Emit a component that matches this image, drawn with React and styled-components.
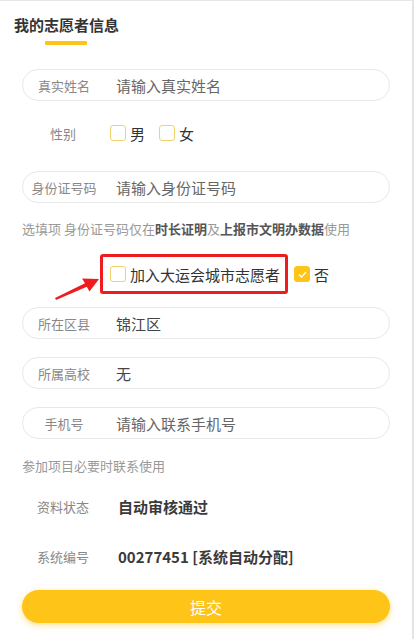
import React from "react";
import styled, { createGlobalStyle } from "styled-components";

const Global = createGlobalStyle`
  html, body { margin: 0; padding: 0; background: #fff; }
  body { font-family: "Noto Sans CJK SC", "Noto Sans", sans-serif; }
`;

const YELLOW = "#fec418";

const Page = styled.div`
  position: relative;
  width: 414px;
  height: 639px;
  box-sizing: border-box;
  border-top: 1px solid #e6e6e6;
  border-right: 2px solid #e4e4e4;
  overflow: hidden;
`;

const Header = styled.div`
  padding: 14px 0 0 14px;
  height: 55px;
  box-sizing: border-box;
`;

const Title = styled.div`
  font-size: 15px;
  font-weight: 700;
  color: #333;
  line-height: 20px;
`;

const Underline = styled.div`
  width: 42px;
  height: 4px;
  margin: 6px 0 0 31px;
  background: ${YELLOW};
  border-radius: 1px;
`;

const Form = styled.div`
  display: flex;
  flex-direction: column;
  padding: 0 22px 0 22px;
`;

const Pill = styled.div`
  display: flex;
  align-items: center;
  height: 32px;
  box-sizing: border-box;
  border: 1px solid #e8e8e8;
  border-radius: 16px;
  margin-top: ${(p) => p.$mt}px;
`;

const Label = styled.div`
  width: 82px;
  flex: none;
  text-align: center;
  font-size: 13px;
  color: #888;
`;

const Value = styled.div`
  display: flex;
  align-items: center;
  margin-left: ${(p) => p.$gap ?? 12}px;
  font-size: 15px;
  color: ${(p) => (p.$placeholder ? "#666" : "#444")};
  font-weight: ${(p) => (p.$bold ? 700 : 400)};
  ${(p) => p.$bold && "color: #3a3a3a;"}
`;

const Row = styled.div`
  display: flex;
  align-items: center;
  height: ${(p) => p.$h ?? 32}px;
  margin-top: ${(p) => p.$mt}px;
`;

const Box = styled.span`
  display: inline-flex;
  align-items: center;
  justify-content: center;
  width: 16px;
  height: 16px;
  box-sizing: border-box;
  border-radius: 3px;
  border: 1.5px solid ${(p) => (p.$checked ? YELLOW : "#f1d36c")};
  background: ${(p) => (p.$checked ? YELLOW : "#fff")};
  flex: none;
`;

const Option = styled.label`
  display: inline-flex;
  align-items: center;
  gap: 4px;
  font-size: 15px;
  color: #333;
  margin-right: ${(p) => p.$mr ?? 0}px;
  margin-left: ${(p) => p.$ml ?? 0}px;
`;

const Note = styled.div`
  font-size: 13px;
  color: #999;
  line-height: 18px;
  margin-top: ${(p) => p.$mt}px;
  b { color: #555; font-weight: 700; }
`;

const Spacer = styled.div`
  width: ${(p) => p.$w}px;
  flex: none;
`;

const Highlight = styled.div`
  display: flex;
  align-items: center;
  height: 40px;
  box-sizing: border-box;
  border: 3px solid #ee1c1c;
  border-radius: 3px;
  padding-left: 7px;
  padding-right: 5px;
`;

const Arrow = styled.svg`
  position: absolute;
  left: 50px;
  top: 274px;
`;

const Submit = styled.button`
  margin-top: ${(p) => p.$mt}px;
  height: 33px;
  border: none;
  border-radius: 17px;
  background: ${YELLOW};
  color: #fff;
  font-family: inherit;
  font-size: 16px;
  box-shadow: 0 2px 6px rgba(254, 196, 24, 0.5);
`;

const Check = ({ checked }) => (
  <Box $checked={checked}>
    {checked && (
      <svg width="11" height="11" viewBox="0 0 11 11">
        <path d="M2 5.5 L4.5 8 L9 3" stroke="#fff" strokeWidth="1.3" fill="none" />
      </svg>
    )}
  </Box>
);

export default function App() {
  return (
    <Page>
      <Global />
      <Header>
        <Title>我的志愿者信息</Title>
        <Underline />
      </Header>
      <Form>
        <Pill $mt={13}>
          <Label>真实姓名</Label>
          <Value $placeholder $gap={11}>请输入真实姓名</Value>
        </Pill>
        <Row $mt={16} $h={32}>
          <Label>性别</Label>
          <Value $gap={6}>
            <Option $mr={14}><Check />男</Option>
            <Option><Check />女</Option>
          </Value>
        </Row>
        <Pill $mt={22}>
          <Label>身份证号码</Label>
          <Value $placeholder $gap={11}>请输入身份证号码</Value>
        </Pill>
        <Note $mt={17}>
          选填项 身份证号码仅在<b>时长证明</b>及<b>上报市文明办数据</b>使用
        </Note>
        <Row $mt={16} $h={40}>
          <Spacer $w={78} />
          <Highlight>
            <Option><Check />加入大运会城市志愿者</Option>
          </Highlight>
          <Option $ml={6}><Check checked />否</Option>
        </Row>
        <Pill $mt={13}>
          <Label>所在区县</Label>
          <Value $gap={11}>锦江区</Value>
        </Pill>
        <Pill $mt={18}>
          <Label>所属高校</Label>
          <Value $gap={11}>无</Value>
        </Pill>
        <Pill $mt={18}>
          <Label>手机号</Label>
          <Value $placeholder $gap={11}>请输入联系手机号</Value>
        </Pill>
        <Note $mt={18}>参加项目必要时联系使用</Note>
        <Row $mt={15} $h={32}>
          <Label>资料状态</Label>
          <Value $bold $gap={14}>自动审核通过</Value>
        </Row>
        <Row $mt={18} $h={32}>
          <Label>系统编号</Label>
          <Value $bold $gap={14}>00277451 [系统自动分配]</Value>
        </Row>
        <Submit $mt={18}>提交</Submit>
      </Form>
      <Arrow width="52" height="30" viewBox="0 0 52 30">
        <polygon points="5,23 35,8.2 32,3.5 49,4 39.5,16.5 36.8,11.8 6,25" fill="#ee1c1c" />
      </Arrow>
    </Page>
  );
}
